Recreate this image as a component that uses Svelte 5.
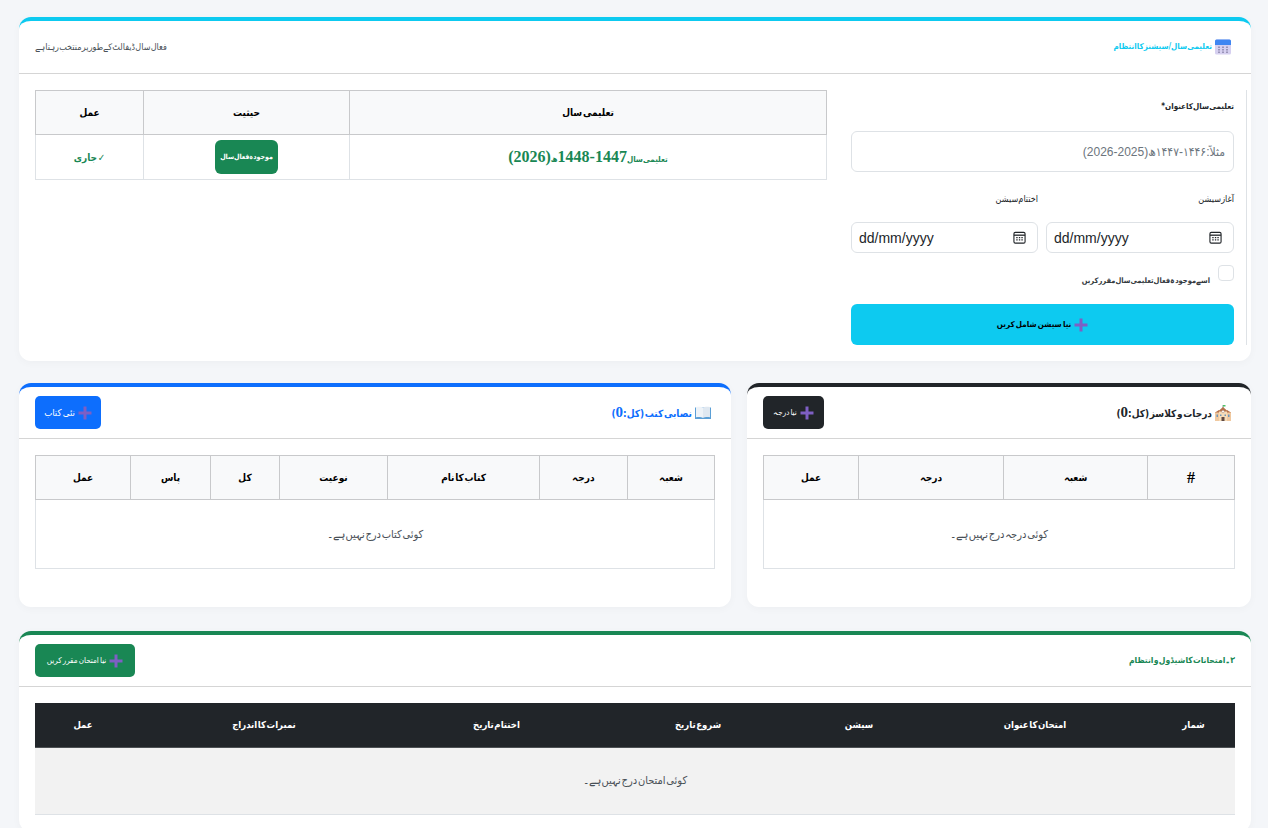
<script>
  const sessionHeads = ['تعلیمی سال', 'حیثیت', 'عمل'];
  const classHeads = ['#', 'شعبہ', 'درجہ', 'عمل'];
  const bookHeads = ['شعبہ', 'درجہ', 'کتاب کا نام', 'نوعیت', 'کل', 'پاس', 'عمل'];
  const examHeads = ['شمار', 'امتحان کا عنوان', 'سیشن', 'شروع تاریخ', 'اختتام تاریخ', 'نمبرات کا اندراج', 'عمل'];
</script>

{#snippet plus()}
  <svg class="plus" viewBox="0 0 14 14" aria-hidden="true"><path d="M5.500 0.500h3v5h5v3h-5v5h-3v-5h-5v-3h5z" /></svg>
{/snippet}

{#snippet calendarIcon()}
  <svg class="emoji" viewBox="0 0 16 16" aria-hidden="true">
    <rect x="0" y="0.500" width="16" height="15" rx="1.500" fill="#d6d0f0" />
    <path d="M0 6V2a1.500 1.500 0 0 1 1.500-1.500h13A1.500 1.500 0 0 1 16 2v4z" fill="#3f86f2" />
    <path d="M3 7.500h2v1.500H3zM7 7.500h2v1.500H7zM11 7.500h2v1.500h-2zM3 10h2v1.500H3zM7 10h2v1.500H7zM11 10h2v1.500h-2zM3 12.500h2V14H3zM7 12.500h2V14H7zM11 12.500h2V14h-2z" fill="#9a94b8" />
  </svg>
{/snippet}

{#snippet schoolIcon()}
  <svg class="emoji" viewBox="0 0 16 16" aria-hidden="true">
    <path d="M8 0v3" stroke="#7a8a80" stroke-width="0.800" />
    <path d="M8 0h2.500v1.500H8z" fill="#4cc267" />
    <rect x="0" y="7" width="16" height="9" fill="#f0c9a0" />
    <rect x="4" y="5" width="8" height="11" fill="#f7dcb8" />
    <path d="M8 2L13 6.500H3z" fill="#b5714a" />
    <path d="M0 7.500L4 5v2.500zM16 7.500L12 5v2.500z" fill="#b5714a" />
    <circle cx="8" cy="6.500" r="1.300" fill="#fff" stroke="#8a6a55" stroke-width="0.400" />
    <rect x="6.500" y="12" width="3" height="4" fill="#5f4a44" />
    <path d="M1.500 9.500h1.500V12H1.500zM13 9.500h1.500V12H13zM5 9.500h1.500V11H5zM9.500 9.500H11V11H9.500z" fill="#6f97b8" />
  </svg>
{/snippet}

{#snippet bookIcon()}
  <svg class="emoji" viewBox="0 0 16 16" aria-hidden="true">
    <path d="M0 2.500h16V14H0z" fill="#5b9fd6" />
    <path d="M1 2c3-.6 5.500-.3 7 .8V13c-1.500-1-4-1.300-7-.8z" fill="#eef3f8" />
    <path d="M15 2c-3-.6-5.500-.3-7 .8V13c1.500-1 4-1.300 7-.8z" fill="#dfe8f1" />
  </svg>
{/snippet}

{#snippet dateField()}
  <div class="date-field">
    <span class="date-text">dd/mm/yyyy</span>
    <svg class="date-icon" viewBox="0 0 14 14" aria-hidden="true">
      <rect x="1" y="1.500" width="12" height="11.500" rx="1.500" fill="none" stroke="#212529" stroke-width="1.200" />
      <path d="M1 4.500h12" stroke="#212529" stroke-width="1.400" />
      <path d="M3.500 6.500h1.500v1.300H3.500zM6.300 6.500h1.500v1.300H6.300zM9 6.500h1.500v1.300H9zM3.500 9h1.500v1.300H3.500zM6.300 9h1.500v1.300H6.300zM9 9h1.500v1.300H9z" fill="#212529" />
    </svg>
  </div>
{/snippet}

<main class="page" dir="rtl">
  <section class="card card-info">
    <header class="card-head head-tall">
      <h2 class="title title-info">{@render calendarIcon()}<span>تعلیمی سال/سیشنز کا انتظام</span></h2>
      <span class="hint">فعال سال ڈیفالٹ کے طور پر منتخب رہتا ہے</span>
    </header>
    <div class="card-body session-grid">
      <form class="session-form">
        <label class="label-strong" for="session-title">تعلیمی سال کا عنوان *</label>
        <input id="session-title" class="text-input" type="text" placeholder="مثلاً:۱۴۴۶-۱۴۴۷ھ(2025-2026)" />
        <div class="date-grid">
          <div>
            <div class="label-small">آغاز سیشن</div>
            {@render dateField()}
          </div>
          <div>
            <div class="label-small">اختتام سیشن</div>
            {@render dateField()}
          </div>
        </div>
        <div class="check-row">
          <span class="checkbox"></span>
          <span class="check-label">اسے موجودہ فعال تعلیمی سال مقرر کریں</span>
        </div>
        <button type="button" class="btn-submit">{@render plus()}<span>نیا سیشن شامل کریں</span></button>
      </form>
      <div class="session-table">
        <table class="grid-table t-session">
          <thead><tr>{#each sessionHeads as h}<th>{h}</th>{/each}</tr></thead>
          <tbody>
            <tr>
              <td class="year-name"><span class="year-ur">تعلیمی سال</span>1447-1448<span class="year-ur">ھ</span>(2026)</td>
              <td><span class="badge">موجودہ فعال سال</span></td>
              <td class="current">✓ جاری</td>
            </tr>
          </tbody>
        </table>
      </div>
    </div>
  </section>

  <div class="two-col">
    <section class="card card-dark">
      <header class="card-head">
        <h2 class="title title-dark">{@render schoolIcon()}<span>درجات و کلاسز (کل:<span class="num">0</span>)</span></h2>
        <button type="button" class="btn btn-dark">{@render plus()}<span>نیا درجہ</span></button>
      </header>
      <div class="card-body body-loose">
        <table class="grid-table t-class">
          <thead><tr>{#each classHeads as h}<th>{h}</th>{/each}</tr></thead>
          <tbody><tr><td class="empty" colspan="4">کوئی درجہ درج نہیں ہے۔</td></tr></tbody>
        </table>
      </div>
    </section>

    <section class="card card-primary">
      <header class="card-head">
        <h2 class="title title-primary">{@render bookIcon()}<span>نصابی کتب (کل:<span class="num">0</span>)</span></h2>
        <button type="button" class="btn btn-primary">{@render plus()}<span>نئی کتاب</span></button>
      </header>
      <div class="card-body body-loose">
        <table class="grid-table t-book">
          <thead><tr>{#each bookHeads as h}<th>{h}</th>{/each}</tr></thead>
          <tbody><tr><td class="empty" colspan="7">کوئی کتاب درج نہیں ہے۔</td></tr></tbody>
        </table>
      </div>
    </section>
  </div>

  <section class="card card-success">
    <header class="card-head">
      <h2 class="title title-success"><span>۳۔امتحانات کا شیڈول و انتظام</span></h2>
      <button type="button" class="btn btn-success">{@render plus()}<span>نیا امتحان مقرر کریں</span></button>
    </header>
    <div class="card-body">
      <table class="exam-table">
        <colgroup>
          <col class="c1" /><col class="c2" /><col class="c3" /><col class="c4" /><col class="c5" /><col class="c6" /><col class="c7" />
        </colgroup>
        <thead><tr>{#each examHeads as h}<th>{h}</th>{/each}</tr></thead>
        <tbody><tr><td class="exam-empty" colspan="7">کوئی امتحان درج نہیں ہے۔</td></tr></tbody>
      </table>
    </div>
  </section>
</main>

<style>
  :global(body) {
    margin: 0;
    background: #f4f6f9;
    font-family: "DejaVu Sans Condensed", "DejaVu Sans", "Noto Sans", sans-serif;
    color: #212529;
    overflow: hidden;
    word-spacing: -0.15em;
  }

  .page {
    padding: 17px 17px 0 19px;
    height: 811px;
    overflow: hidden;
  }

  .card {
    background: #fff;
    border-radius: 12px;
    border-top: 4px solid #0dcaf0;
    box-shadow: 0 2px 8px rgba(0, 0, 0, 0.03);
  }
  .card-info { border-top-color: #0dcaf0; }
  .card-dark { border-top-color: #212529; }
  .card-primary { border-top-color: #0d6efd; }
  .card-success { border-top-color: #198754; min-height: 197px; }

  .card-head {
    display: flex;
    align-items: center;
    justify-content: space-between;
    padding: 9px 16px;
    height: 33px;
    box-sizing: content-box;
    border-bottom: 1px solid #d5d5d5;
  }
  .head-tall { height: 34px; }

  .title {
    margin: 0;
    display: flex;
    align-items: center;
    gap: 3px;
    font-size: 10px;
    font-weight: 700;
    line-height: 1;
  }
  .title-info { color: #0dcaf0; font-size: 8px; }
  .title-dark { color: #212529; }
  .title-primary { color: #0d6efd; }
  .title-success { color: #198754; font-size: 8.500px; }
  .num { font: 700 15px "Liberation Serif", serif; }

  .emoji { width: 16px; height: 16px; flex: none; margin-right: 4px; }
  .hint { font-size: 9px; color: #495057; }

  .card-body { padding: 16px; }
  .body-loose { padding-bottom: 38px; }

  .session-grid {
    display: grid;
    grid-template-columns: 408px 816px;
    padding: 16px 4px 16px 4px;
  }

  .session-form {
    padding: 0 12px;
    border-right: 1px solid #dee2e6;
    display: flex;
    flex-direction: column;
  }
  .label-strong {
    font-size: 8px;
    font-weight: 700;
    line-height: 24px;
    margin: 5px 0 12px;
    color: #212529;
  }
  .text-input {
    height: 41px;
    box-sizing: border-box;
    width: 100%;
    border: 1px solid #dee2e6;
    border-radius: 6px;
    padding: 0 8px;
    font: 12px "Liberation Sans", "DejaVu Sans Condensed", sans-serif;
    background: #fff;
    outline: none;
  }
  .text-input::placeholder { color: #6c757d; opacity: 1; }

  .date-grid {
    display: grid;
    grid-template-columns: 188px 187px;
    gap: 8px;
  }
  .label-small {
    font-size: 9px;
    line-height: 24px;
    margin: 15px 0 11px;
  }
  .date-field {
    height: 31px;
    box-sizing: border-box;
    border: 1px solid #dee2e6;
    border-radius: 6px;
    display: flex;
    direction: ltr;
    align-items: center;
    justify-content: space-between;
    padding: 0 11px 0 7px;
    background: #fff;
  }
  .date-text {
    font: 14px "Liberation Sans", Arial, sans-serif;
    word-spacing: 0;
    color: #212529;
  }
  .date-icon { width: 13px; height: 13px; }

  .check-row {
    display: flex;
    align-items: flex-start;
    gap: 8px;
    margin-top: 12px;
    height: 39px;
  }
  .checkbox {
    width: 16px;
    height: 16px;
    box-sizing: border-box;
    border: 1px solid #dee2e6;
    border-radius: 4px;
    background: #fff;
    flex: none;
  }
  .check-label {
    font-size: 7.500px;
    font-weight: 700;
    line-height: 16px;
    margin-top: 8px;
    color: #343a40;
  }

  .btn-submit {
    height: 41px;
    border: 0;
    border-radius: 6px;
    background: #0dcaf0;
    color: #000;
    display: flex;
    align-items: center;
    justify-content: center;
    gap: 3px;
    font: 700 8px "DejaVu Sans Condensed", "DejaVu Sans", sans-serif;
    word-spacing: -0.15em;
    padding: 0;
  }

  .plus { width: 14px; height: 14px; flex: none; fill: #7e5fc4; }

  .session-table { padding: 0 12px; }

  table { border-collapse: collapse; width: 100%; }

  .grid-table { table-layout: fixed; }
  .grid-table th {
    height: 44px;
    box-sizing: border-box;
    background: #f8f9fa;
    border: 1px solid #c8c9cb;
    font-size: 10px;
    font-weight: 700;
    color: #000;
    padding: 0 4px;
    text-align: center;
  }
  .grid-table td {
    border: 1px solid #dee2e6;
    text-align: center;
    padding: 0;
    box-sizing: border-box;
  }

  .t-session th:nth-child(1) { width: 477px; }
  .t-session th:nth-child(2) { width: 206px; }
  .t-session td { height: 45px; }
  .year-name { color: #198754; font: 700 16px "Liberation Serif", serif; }
  .year-ur { font: 700 8px "DejaVu Sans Condensed", "DejaVu Sans", sans-serif; }
  .badge {
    display: inline-flex;
    align-items: center;
    justify-content: center;
    width: 63px;
    height: 34px;
    background: #198754;
    color: #fff;
    border-radius: 6px;
    font-size: 7px;
    font-weight: 700;
    white-space: nowrap;
    vertical-align: middle;
  }
  .current { color: #198754; font-size: 10px; font-weight: 700; }

  .two-col {
    display: grid;
    grid-template-columns: 504px 712px;
    gap: 16px;
    margin: 22px 0 24px;
  }

  .t-class th:nth-child(1) { width: 87px; font-family: "Liberation Serif", serif; font-size: 16px; }
  .t-class th:nth-child(2) { width: 144px; }
  .t-class th:nth-child(3) { width: 145px; }
  .t-class .empty, .t-book .empty { height: 69px; }

  .t-book th:nth-child(1) { width: 87px; }
  .t-book th:nth-child(2) { width: 88px; }
  .t-book th:nth-child(3) { width: 152px; }
  .t-book th:nth-child(4) { width: 108px; }
  .t-book th:nth-child(5) { width: 69px; }
  .t-book th:nth-child(6) { width: 80px; }

  .empty, .exam-empty { font-size: 11px; color: #495057; }

  .btn {
    height: 33px;
    border: 0;
    border-radius: 5px;
    color: #fff;
    display: inline-flex;
    align-items: center;
    justify-content: center;
    gap: 3px;
    font: 8px "DejaVu Sans Condensed", "DejaVu Sans", sans-serif;
    word-spacing: -0.15em;
    white-space: nowrap;
    padding: 0;
    flex: none;
  }
  .btn-dark { background: #212529; width: 61px; }
  .btn-primary { background: #0d6efd; width: 66px; font-size: 9.500px; }
  .btn-success { background: #198754; width: 100px; }

  .exam-table { table-layout: fixed; }
  .c1 { width: 83px; }
  .c2 { width: 234px; }
  .c3 { width: 118px; }
  .c4 { width: 204px; }
  .c5 { width: 199px; }
  .c6 { width: 266px; }
  .exam-table th {
    height: 44px;
    box-sizing: border-box;
    background: #212529;
    color: #fff;
    font-size: 9.500px;
    font-weight: 700;
    text-align: center;
    padding: 0;
    border-bottom: 1px solid #4d5154;
  }
  .exam-empty {
    height: 67px;
    box-sizing: border-box;
    padding: 0;
    background: #f2f2f2;
    text-align: center;
    border-bottom: 1px solid #dee2e6;
  }
</style>
